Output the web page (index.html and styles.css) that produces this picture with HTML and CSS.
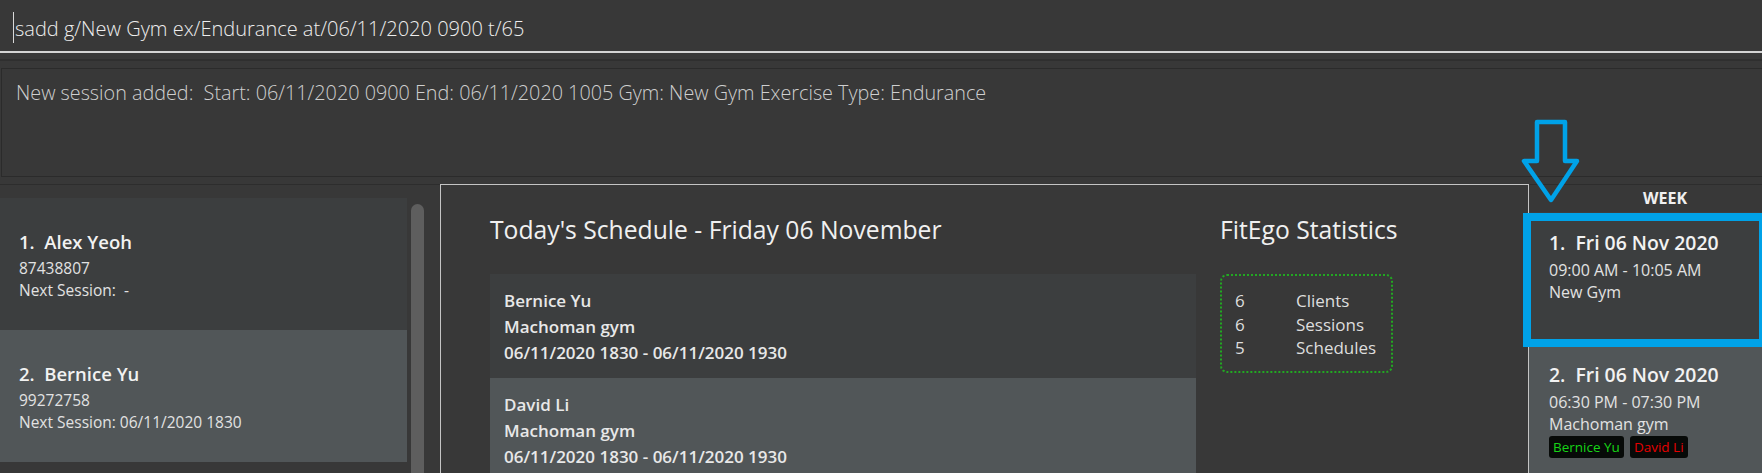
FILE: index.html
```html
<!DOCTYPE html>
<html>
<head>
<meta charset="utf-8">
<link rel="stylesheet" href="styles.css">
</head>
<body>
<div class="app">
  <div class="command"><span class="caret"></span><span class="command-text">sadd g/New Gym ex/Endurance at/06/11/2020 0900 t/65</span></div>
  <div class="sep1"></div>
  <div class="result">New session added:  Start: 06/11/2020 0900 End: 06/11/2020 1005 Gym: New Gym Exercise Type: Endurance</div>
  <div class="sep2"></div>
  <div class="main">
    <div class="clients">
      <div class="client-list">
        <div class="client-card even">
          <div class="card-title">1.  Alex Yeoh</div>
          <div class="card-line first">87438807</div>
          <div class="card-line">Next Session:  -</div>
        </div>
        <div class="client-card odd">
          <div class="card-title">2.  Bernice Yu</div>
          <div class="card-line first">99272758</div>
          <div class="card-line">Next Session: 06/11/2020 1830</div>
        </div>
      </div>
      <div class="scrollbar"></div>
    </div>
    <div class="center">
      <div class="schedule-col">
        <h2 class="panel-title">Today's Schedule - Friday 06 November</h2>
        <div class="sched-list">
          <div class="sched-item even">
            <div>Bernice Yu</div>
            <div>Machoman gym</div>
            <div>06/11/2020 1830 - 06/11/2020 1930</div>
          </div>
          <div class="sched-item odd">
            <div>David Li</div>
            <div>Machoman gym</div>
            <div>06/11/2020 1830 - 06/11/2020 1930</div>
          </div>
        </div>
      </div>
      <div class="stats-col">
        <h2 class="panel-title">FitEgo Statistics</h2>
        <div class="stats-box">
          <span>6</span><span>Clients</span>
          <span>6</span><span>Sessions</span>
          <span>5</span><span>Schedules</span>
        </div>
      </div>
    </div>
    <div class="week">
      <div class="week-title">WEEK</div>
      <div class="week-card even">
        <div class="card-title week-card-title">1.  Fri 06 Nov 2020</div>
        <div class="week-line first">09:00 AM - 10:05 AM</div>
        <div class="week-line">New Gym</div>
      </div>
      <div class="week-card odd">
        <div class="card-title week-card-title">2.  Fri 06 Nov 2020</div>
        <div class="week-line first">06:30 PM - 07:30 PM</div>
        <div class="week-line">Machoman gym</div>
        <div class="tags">
          <span class="tag green">Bernice Yu</span>
          <span class="tag red">David Li</span>
        </div>
      </div>
    </div>
  </div>
  <div class="highlight"></div>
  <svg class="arrow" width="66" height="92" viewBox="0 0 66 92">
    <path d="M19 6 H47 V45 H59 L33 84 L6 45 H19 Z" fill="none" stroke="#00a2e8" stroke-width="4.5" stroke-linejoin="round"/>
  </svg>
</div>
</body>
</html>
```

FILE: styles.css
```css
* { box-sizing: border-box; margin: 0; padding: 0; }

html, body {
  width: 1762px;
  height: 473px;
  overflow: hidden;
  background: #383838;
}

body {
  font-family: "Open Sans", "Noto Sans", sans-serif;
  color: #ffffff;
}

.app {
  position: relative;
  width: 1762px;
  height: 473px;
  overflow: hidden;
  display: flex;
  flex-direction: column;
}

.command {
  height: 53px;
  border-bottom: 2px solid #d4d4d4;
  display: flex;
  align-items: center;
  padding-left: 13px;
  padding-top: 6px;
  flex: none;
}

.caret {
  width: 1px;
  height: 31px;
  background: #d8d8d8;
  margin-right: 1px;
  margin-top: -3px;
}

.command-text {
  font-size: 20px;
  font-weight: 300;
  color: #eeeeee;
  white-space: pre;
}

.sep1 {
  height: 8px;
  border-bottom: 2px solid #2f2f2f;
  flex: none;
}

.result {
  flex: none;
  height: 109px;
  margin-top: 7px;
  margin-left: 1px;
  border: 1px solid #2b2b2b;
  border-right: none;
  padding: 11px 0 0 14px;
  font-size: 19.8px;
  font-weight: 300;
  line-height: 26px;
  color: #cfcfcf;
  white-space: pre;
}

.sep2 {
  flex: none;
  height: 7px;
}

.main {
  flex: 1;
  display: flex;
  min-height: 0;
}

.clients {
  width: 440px;
  flex: none;
  border-top: 1px solid #2d2d2d;
  padding-top: 13px;
  display: flex;
  overflow: hidden;
}

.client-list {
  width: 407px;
  flex: none;
}

.even { background: #3c3e3f; }
.odd { background: #515658; }

.client-card {
  height: 132px;
  padding: 31px 0 0 19px;
}

.card-title {
  font-size: 18.5px;
  font-weight: 600;
  line-height: 26px;
  color: #f2f2f2;
  white-space: pre;
}

.card-line {
  font-size: 15.5px;
  line-height: 22px;
  color: #e2e2e2;
  white-space: pre;
}

.card-line.first { margin-top: 2px; }

.scrollbar {
  width: 13px;
  height: 300px;
  margin: 6px 0 0 4px;
  border-radius: 7px;
  background: #5e5e5e;
  flex: none;
}

.center {
  width: 1089px;
  flex: none;
  border: 1px solid #c4c4c4;
  border-bottom: none;
  padding: 29px 0 0 49px;
  display: flex;
  gap: 24px;
  overflow: hidden;
}

.schedule-col {
  width: 706px;
  flex: none;
}

.panel-title {
  font-size: 24.7px;
  font-weight: 500;
  line-height: 32px;
  color: #f0f0f0;
  margin-bottom: 28px;
  white-space: nowrap;
}

.sched-item {
  height: 104px;
  padding: 14px 0 0 14px;
  font-size: 17px;
  font-weight: 600;
  line-height: 26px;
  color: #e8e8e8;
}

.stats-box {
  width: 173px;
  height: 99px;
  border: 2px dotted #22a822;
  border-radius: 7px;
  padding: 13px 0 0 13px;
  display: grid;
  grid-template-columns: 61px auto;
  grid-auto-rows: 23.5px;
  align-content: start;
  font-size: 17px;
  line-height: 23.5px;
  color: #dedede;
}

.week {
  flex: 1;
  border-top: 1px solid #2d2d2d;
  overflow: hidden;
}

.week-title {
  padding: 2px 0 0 39px;
  height: 27px;
  text-align: center;
  font-size: 16px;
  font-weight: 700;
  line-height: 22px;
  color: #f0f0f0;
}

.week-card {
  height: 132px;
  padding: 18px 0 0 20px;
}

.week-card-title {
  font-size: 19.4px;
}

.week-line {
  font-size: 16px;
  line-height: 22px;
  color: #e2e2e2;
}

.week-line.first { margin-top: 3px; }

.tags {
  display: flex;
  gap: 6px;
  margin-top: 1px;
}

.tag {
  height: 22px;
  padding: 0 4px;
  border-radius: 3px;
  background: #070a08;
  font-size: 13.5px;
  line-height: 22px;
}

.tag.green { color: #16d416; }
.tag.red { color: #e50000; }

.highlight {
  position: absolute;
  left: 1523px;
  top: 213px;
  width: 244px;
  height: 134px;
  border: 8px solid #00a2e8;
}

.arrow {
  position: absolute;
  left: 1518px;
  top: 116px;
}
```
